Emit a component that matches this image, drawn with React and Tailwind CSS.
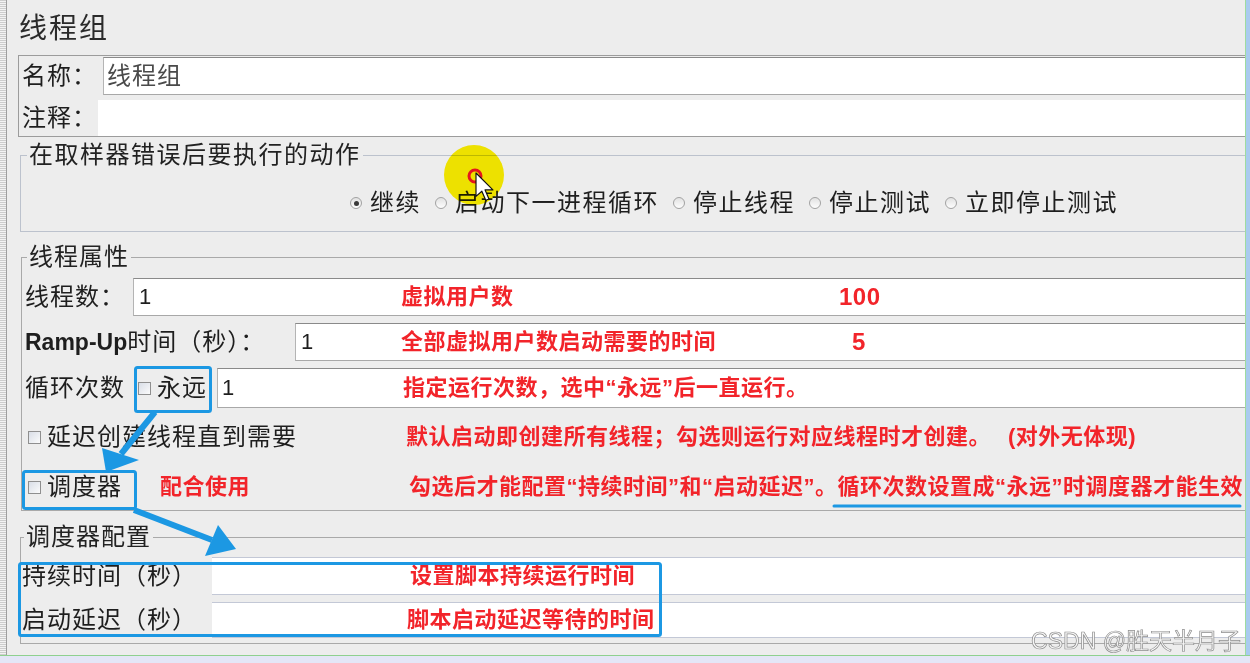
import React from 'react';

const ui = "font-['Liberation_Sans','Noto_Sans_CJK_SC',sans-serif]";
const note = "font-['Liberation_Sans','Noto_Sans_CJK_SC',sans-serif] font-bold text-[22px] leading-[24px] tracking-[0.5px] text-[#f2242a] whitespace-nowrap";

function Radio({ checked, children }) {
  return (
    <span className="flex items-center gap-[8px]">
      <span className="w-[12px] h-[12px] rounded-full border border-[#a2a2a2] bg-linear-to-b from-[#e2e2e2] to-[#fdfdfd] flex items-center justify-center">
        {checked && <span className="w-[5px] h-[5px] rounded-full bg-[#3a3a3a]" />}
      </span>
      <span>{children}</span>
    </span>
  );
}

function Check() {
  return (
    <span className="w-[13px] h-[13px] shrink-0 border border-[#8f8f8f] bg-linear-to-br from-[#d9dee7] to-[#fbfbfb]" />
  );
}

function Field({ className = '', children }) {
  return (
    <div className={`flex-1 min-w-0 bg-white border-t border-t-[#8a8a8a] border-b border-b-[#a8a8a8] border-l border-l-[#b4b4b4] flex items-center ${className}`}>
      {children}
    </div>
  );
}

function Legend({ children, className = '' }) {
  return (
    <legend className={`px-[2px] text-[24px] leading-[24px] tracking-[1.5px] text-[#222] ${className}`}>{children}</legend>
  );
}

function Overlay() {
  return (
    <svg className="absolute inset-0 pointer-events-none" width="1250" height="663" viewBox="0 0 1250 663">
      {/* annotation boxes */}
      <rect x="135.5" y="367.5" width="75" height="44" rx="2" fill="none" stroke="#1c98e3" strokeWidth="3" />
      <rect x="23.5" y="471.5" width="112" height="37" rx="2" fill="none" stroke="#1c98e3" strokeWidth="3" />
      <rect x="19.5" y="563.5" width="641" height="72" rx="2" fill="none" stroke="#1c98e3" strokeWidth="3" />
      <line x1="834" y1="506" x2="1240" y2="506" stroke="#1c98e3" strokeWidth="3" strokeLinecap="round" />
      {/* arrow from 永远 to 调度器 */}
      <line x1="155" y1="412" x2="121" y2="454" stroke="#1c98e3" strokeWidth="6" />
      <polygon points="106,472 102,448 139,460" fill="#1c98e3" />
      {/* arrow from 调度器 to 调度器配置 */}
      <line x1="134" y1="510" x2="212" y2="540" stroke="#1c98e3" strokeWidth="6" />
      <polygon points="236,549 205,556 218,525" fill="#1c98e3" />
    </svg>
  );
}

function CursorMark() {
  return (
    <svg className="absolute left-0 top-0 pointer-events-none" width="1250" height="663" viewBox="0 0 1250 663">
      <g className="mix-blend-multiply">
        <ellipse cx="474" cy="175" rx="30" ry="30" fill="#fff200" />
      </g>
      <circle cx="475" cy="176" r="6" fill="none" stroke="#e5161c" strokeWidth="3" />
      <path
        d="M0,0 L0,18 L4.5,14 L7.5,21 L10,20 L7,13 L13,13 Z"
        transform="translate(476,173) scale(1.3)"
        fill="#fff"
        stroke="#111"
        strokeWidth="0.9"
        strokeLinejoin="round"
      />
    </svg>
  );
}

export default function App() {
  return (
    <div className={`relative w-[1250px] h-[663px] overflow-hidden bg-[#ededed] text-[#1e1e1e] ${ui}`}>
      <div className="flex h-[655px]">
        {/* left splitter */}
        <div className="w-[6px] bg-[repeating-linear-gradient(0deg,#cdcdcd_0px,#cdcdcd_1px,#f3f3f3_1px,#f3f3f3_2px)]" />
        <div className="w-[1px] bg-[#9e9e9e]" />

        {/* main column */}
        <div className="flex-1 min-w-0 flex flex-col">
          {/* title */}
          <div className="h-[52px] flex items-center pt-[6px] pl-[12px] text-[28px] leading-[30px] tracking-[2px] text-[#2a2a2a]">
            线程组
          </div>

          {/* name / comment */}
          <div className="mt-[3px] ml-[11px] border border-r-0 border-[#9c9c9c] flex flex-col gap-[4px] text-[24px] leading-[24px] tracking-[1px]">
            <div className="h-[40px] flex items-center">
              <span className="w-[84px] pl-[3px]">名称：</span>
              <Field className="h-[38px] border-l-[#8a8a8a] pl-[3px] text-[#4a4a4a]">线程组</Field>
            </div>
            <div className="h-[36px] flex items-center">
              <span className="w-[79px] pl-[3px]">注释：</span>
              <div className="flex-1 h-[36px] bg-white" />
            </div>
          </div>

          {/* sampler error action */}
          <fieldset className="mt-[6px] ml-[13px] border border-r-0 border-[#bcc2cd] pb-[16px]">
            <Legend className="ml-[6px]">在取样器错误后要执行的动作</Legend>
            <div className="mt-[24px] h-[24px] pl-[329px] flex items-center gap-[14px] text-[24px] leading-[24px] tracking-[1.5px]">
              <Radio checked>继续</Radio>
              <Radio>启动下一进程循环</Radio>
              <Radio>停止线程</Radio>
              <Radio>停止测试</Radio>
              <Radio>立即停止测试</Radio>
            </div>
          </fieldset>

          {/* thread properties */}
          <fieldset className="mt-[13px] ml-[14px] border border-r-0 border-[#a9a9a9] pb-[8px] text-[24px] leading-[24px] tracking-[1px]">
            <Legend className="ml-[5px] tracking-[1px]">线程属性</Legend>

            <div className="mt-[9px] h-[38px] flex items-center">
              <span className="w-[111px] pl-[3px] shrink-0">线程数：</span>
              <Field className="h-[38px] pl-[5px]">
                <span className="w-[262px] shrink-0 text-[22px] tracking-normal">1</span>
                <span className={`w-[438px] shrink-0 ${note}`}>虚拟用户数</span>
                <span className={`${note} text-[24px]`}>100</span>
              </Field>
            </div>

            <div className="mt-[7px] h-[38px] flex items-center">
              <span className="w-[273px] pl-[3px] shrink-0">
                <b className="font-bold tracking-normal text-[23px]">Ramp-Up</b>时间（秒）：
              </span>
              <Field className="h-[38px] pl-[5px]">
                <span className="w-[100px] shrink-0 text-[22px] tracking-normal">1</span>
                <span className={`w-[451px] shrink-0 ${note}`}>全部虚拟用户数启动需要的时间</span>
                <span className={`${note} text-[24px]`}>5</span>
              </Field>
            </div>

            <div className="mt-[7px] h-[40px] flex items-center">
              <span className="w-[116px] pl-[3px] shrink-0">循环次数</span>
              <Check />
              <span className="ml-[6px] shrink-0">永远</span>
              <Field className="ml-[10px] h-[40px] pl-[4px]">
                <span className="w-[181px] shrink-0 text-[22px] tracking-normal">1</span>
                <span className={note}>指定运行次数，选中“永远”后一直运行。</span>
              </Field>
            </div>

            <div className="mt-[14px] h-[30px] flex items-center pl-[6px]">
              <span className="w-[378px] shrink-0 flex items-center gap-[6px]">
                <Check />
                <span>延迟创建线程直到需要</span>
              </span>
              <span className={`w-[602px] shrink-0 ${note}`}>默认启动即创建所有线程；勾选则运行对应线程时才创建。</span>
              <span className={note}>(对外无体现)</span>
            </div>

            <div className="mt-[20px] h-[30px] flex items-center pl-[6px]">
              <span className="w-[132px] shrink-0 flex items-center gap-[6px]">
                <Check />
                <span>调度器</span>
              </span>
              <span className={`w-[249px] shrink-0 ${note} text-[#1b90e0]`}>配合使用</span>
              <span className={note}>勾选后才能配置“持续时间”和“启动延迟”。循环次数设置成“永远”时调度器才能生效</span>
            </div>
          </fieldset>

          {/* scheduler config */}
          <fieldset className="mt-[14px] ml-[13px] border border-r-0 border-[#a9a9a9] pb-[5px] text-[24px] leading-[24px] tracking-[1px]">
            <Legend className="ml-[3px] tracking-[1px]">调度器配置</Legend>
            <div className="mt-[8px] h-[38px] flex items-center">
              <span className="w-[191px] pl-[1px] shrink-0">持续时间（秒）</span>
              <Field className="h-[38px] pl-[198px] border-t-[#c3c8d6] border-b-[#c3c8d6] border-l-0">
                <span className={note}>设置脚本持续运行时间</span>
              </Field>
            </div>
            <div className="mt-[7px] h-[36px] flex items-center">
              <span className="w-[191px] pl-[1px] shrink-0">启动延迟（秒）</span>
              <Field className="h-[36px] pl-[195px] border-t-[#c3c8d6] border-b-[#c3c8d6] border-l-0">
                <span className={note}>脚本启动延迟等待的时间</span>
              </Field>
            </div>
          </fieldset>
        </div>

        {/* right window edge */}
        <div className="w-[1px] bg-[#9fdc9f]" />
        <div className="w-[4px] bg-[#a9cbef]" />
      </div>
      <div className="h-[1px] bg-[#8fd18f]" />
      <div className="h-[7px] bg-[#e4e6f7]" />

      <Overlay />
      <CursorMark />

      {/* watermark */}
      <div className="absolute right-[9px] bottom-[10px] text-[23px] leading-[24px] text-[#f6f6f6] [-webkit-text-stroke:0.7px_#8d8d8d] font-['Liberation_Sans','Noto_Sans_CJK_SC',sans-serif]">
        CSDN @胜天半月子
      </div>
    </div>
  );
}
